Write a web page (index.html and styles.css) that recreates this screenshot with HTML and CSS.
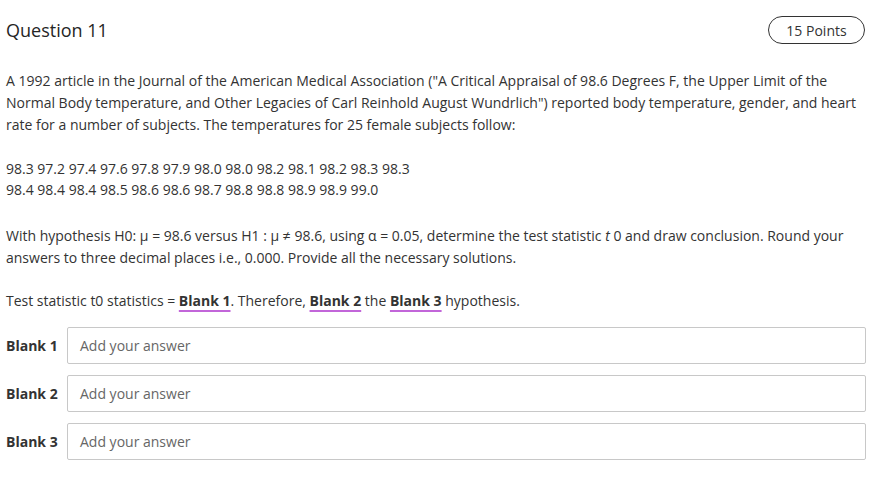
FILE: index.html
```html
<!DOCTYPE html>
<html>
<head>
<meta charset="utf-8">
<link rel="stylesheet" href="styles.css">
</head>
<body>
<div class="question">
  <div class="header">
    <h2 class="title">Question 11</h2>
    <span class="points">15 Points</span>
  </div>
  <p class="para first">A 1992 article in the Journal of the American Medical Association ("A Critical Appraisal of 98.6 Degrees F, the Upper Limit of the Normal Body temperature, and Other Legacies of Carl Reinhold August Wundrlich") reported body temperature, gender, and heart rate for a number of subjects. The temperatures for 25 female subjects follow:</p>
  <p class="para data">98.3 97.2 97.4 97.6 97.8 97.9 98.0 98.0 98.2 98.1 98.2 98.3 98.3<br>98.4 98.4 98.4 98.5 98.6 98.6 98.7 98.8 98.8 98.9 98.9 99.0</p>
  <p class="para hyp">With hypothesis H0: μ = 98.6 versus H1 : μ ≠ 98.6, using α = 0.05, determine the test statistic <i>t</i> 0 and draw conclusion. Round your answers to three decimal places i.e., 0.000. Provide all the necessary solutions.</p>
  <p class="para stmt">Test statistic t0 statistics = <b class="blank">Blank 1</b>. Therefore, <b class="blank">Blank 2</b> the <b class="blank">Blank 3</b> hypothesis.</p>
  <div class="answers">
    <div class="row"><span class="label">Blank 1</span><div class="input">Add your answer</div></div>
    <div class="row"><span class="label">Blank 2</span><div class="input">Add your answer</div></div>
    <div class="row"><span class="label">Blank 3</span><div class="input">Add your answer</div></div>
  </div>
</div>
</body>
</html>
```

FILE: styles.css
```css
body {
  margin: 0;
  background: #fff;
  font-family: "Open Sans", "Noto Sans", sans-serif;
  color: #333;
}
.question {
  width: 860px;
  padding: 16px 0 0 6px;
}
.header {
  display: flex;
  justify-content: space-between;
  align-items: center;
  height: 28px;
}
.title {
  margin: 0;
  font-size: 18px;
  font-weight: 400;
  color: #252525;
}
.points {
  box-sizing: border-box;
  height: 28px;
  width: 97px;
  margin-right: 1px;
  border: 1px solid #333;
  border-radius: 14px;
  font-size: 14px;
  display: flex;
  align-items: center;
  justify-content: center;
  color: #333;
}
.para {
  font-size: 14px;
  line-height: 22px;
  margin: 22px 0 0 0;
}
.para.first {
  margin-top: 26px;
}
.data {
  line-height: 21px;
}
.para.hyp {
  margin-top: 25px;
}
.para.stmt {
  margin-top: 21px;
}
.blank {
  font-weight: 700;
  text-decoration: underline;
  text-decoration-color: #c266d9;
  text-decoration-thickness: 2px;
  text-underline-offset: 4px;
}
.answers {
  margin-top: 15px;
  display: flex;
  flex-direction: column;
  gap: 11px;
}
.row {
  display: flex;
  align-items: center;
}
.label {
  width: 61px;
  font-size: 14px;
  font-weight: 700;
}
.input {
  flex: 1;
  height: 37px;
  box-sizing: border-box;
  border: 1px solid #c8c8c8;
  border-radius: 2px;
  padding-left: 12px;
  display: flex;
  align-items: center;
  font-size: 14px;
  color: #666;
}
```
